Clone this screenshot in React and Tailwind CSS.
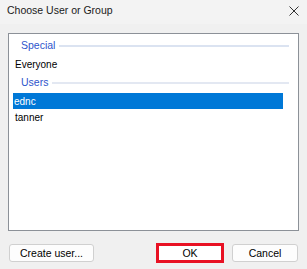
export default function App() {
  const font = { fontFamily: '"Liberation Sans", Arial, sans-serif' };
  return (
    <div
      className="w-[307px] h-[269px] bg-[#f0f0f0] flex flex-col text-[10.5px] text-black overflow-hidden"
      style={font}
    >
      {/* title bar */}
      <div className="h-[24px] flex items-start justify-between pl-[7px] pr-[8px] pt-[3px] bg-[#f3f3f3]">
        <span className="leading-[15px] text-[10.5px] text-[#1a1a1a]">Choose User or Group</span>
        <svg width="10" height="10" viewBox="0 0 10 10" className="mt-[3px]">
          <path d="M0.5 0.5 L9.5 9.5 M9.5 0.5 L0.5 9.5" stroke="#333" strokeWidth="1" />
        </svg>
      </div>

      {/* list */}
      <div className="mt-[9px] mx-[8px] w-[291px] h-[198px] bg-white border border-[#8c9198] pt-px">
        <div className="h-[21px] flex items-center pl-[12px] pr-[9px]">
          <span className="text-[#2e55cc] text-[10.5px]">Special</span>
          <div className="flex-1 h-[2px] bg-[#dbe3f1] ml-[4px]" />
        </div>
        <div className="h-[17px] flex items-center pl-[6px] text-[10px]">Everyone</div>
        <div className="h-[20px] flex items-center pl-[12px] pr-[9px]">
          <span className="text-[#2e55cc] text-[10.5px]">Users</span>
          <div className="flex-1 h-[2px] bg-[#e3e8f2] ml-[4px]" />
        </div>
        <div className="h-[16px] flex items-center ml-[4px] mr-[15px] pl-[1px] bg-[#0078d7] text-white text-[10px]">
          ednc
        </div>
        <div className="h-[17px] flex items-center pl-[6px] text-[10px]">tanner</div>
      </div>

      {/* buttons */}
      <div className="flex items-center mt-[12px] px-[9px]">
        <button className="w-[85px] h-[18px] rounded-[3px] border border-[#d0d0d0] bg-[#fdfdfd] text-[10.5px] leading-none flex items-center justify-center">
          Create user...
        </button>
        <div className="ml-auto border-[3px] border-[#e81123] mr-[8px]">
          <button className="w-[62px] h-[14px] bg-white text-[10.5px] leading-none flex items-center justify-center">
            OK
          </button>
        </div>
        <button className="w-[66px] h-[18px] rounded-[3px] border border-[#d0d0d0] bg-[#fdfdfd] text-[10.5px] leading-none flex items-center justify-center">
          Cancel
        </button>
      </div>
    </div>
  );
}
